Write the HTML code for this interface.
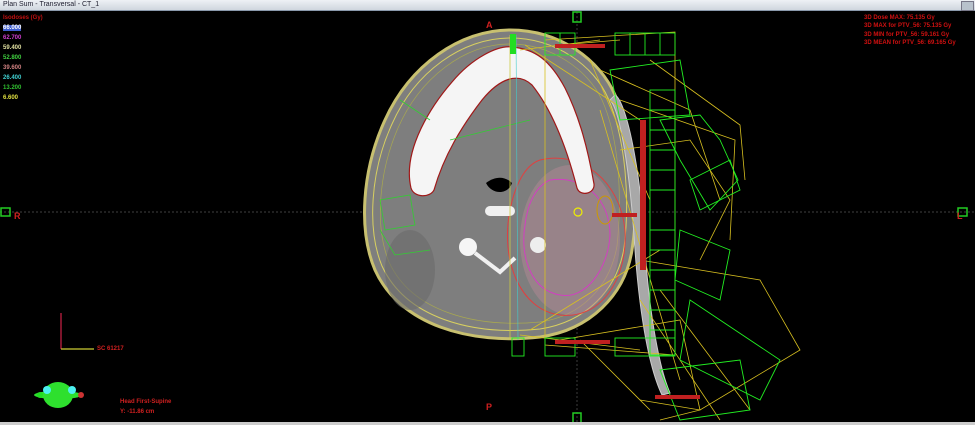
<!DOCTYPE html>
<html><head><style>
html,body{margin:0;padding:0;width:975px;height:425px;overflow:hidden;background:#000;font-family:"Liberation Sans",sans-serif}
.t{position:absolute;font-size:6px;font-weight:bold}
</style></head><body>
<div style="position:absolute;left:0;top:0;width:975px;height:10px;background:linear-gradient(#eef1f5,#cfd6de);border-bottom:1px solid #8a99ab"></div>
<div class="t" style="left:3px;top:1px;color:#223;font-weight:normal;font-size:7px">Plan Sum - Transversal - CT_1</div>
<div style="position:absolute;left:961px;top:1px;width:11px;height:8px;background:#b8c2cc;border:1px solid #778"></div>
<svg width="975" height="425" style="position:absolute;left:0;top:0">
<line x1="0" y1="212" x2="975" y2="212" stroke="#555" stroke-dasharray="2,2" stroke-width="0.7"/>
<line x1="577" y1="12" x2="577" y2="425" stroke="#555" stroke-dasharray="2,2" stroke-width="0.7"/>
<rect x="573" y="12" width="8" height="10" fill="none" stroke="#2c2" stroke-width="1.5"/>
<rect x="573" y="413" width="8" height="10" fill="none" stroke="#2c2" stroke-width="1.5"/>
<rect x="1" y="208" width="9" height="8" fill="none" stroke="#2c2" stroke-width="1.5"/>
<rect x="958" y="208" width="9" height="8" fill="none" stroke="#2c2" stroke-width="1.5"/>
<!-- head -->
<path d="M510,30 C560,30 600,60 615,95 C635,140 640,200 632,250 C625,295 590,330 540,337 C470,345 400,325 375,270 C358,230 362,170 385,120 C410,65 460,30 510,30Z" fill="#7e7e7e" stroke="#c8c070" stroke-width="3"/>
<path d="M510,38 C556,38 594,66 608,98 C626,140 630,200 624,248 C617,290 586,322 540,329 C472,336 406,318 382,266 C367,230 370,172 392,124 C415,72 462,38 510,38Z" fill="none" stroke="#d8d060" stroke-width="1"/>
<path d="M510,44 C552,44 588,70 602,100 C620,140 622,200 617,246 C610,286 582,316 540,322 C476,328 412,312 389,262 C375,228 378,174 398,128 C420,78 464,44 510,44Z" fill="none" stroke="#a8a850" stroke-width="0.7"/>
<ellipse cx="410" cy="270" rx="25" ry="40" fill="#6a6a6a" opacity="0.6"/>
<ellipse cx="570" cy="240" rx="50" ry="75" fill="#b88a96" opacity="0.45"/>
<path d="M540,160 C580,150 620,180 625,230 C628,280 600,320 560,315 C520,310 500,260 510,210 C515,185 525,165 540,160Z" fill="none" stroke="#e04040" stroke-width="1"/>
<path d="M550,180 C585,175 610,200 610,235 C608,270 585,300 560,295 C530,290 520,255 525,225 C528,200 538,185 550,180Z" fill="none" stroke="#d040c0" stroke-width="1"/>
<!-- mandible -->
<path d="M411,188 C402,150 432,105 452,82 C472,58 498,45 512,47 C535,49 550,60 565,88 C580,118 588,150 594,184 C595,194 580,197 577,188 C566,145 552,110 532,85 C518,72 500,78 482,100 C462,126 444,155 434,190 C430,198 414,198 411,188Z" fill="#f5f5f5" stroke="#a01818" stroke-width="1.2"/>
<path d="M486,183 C495,176 505,176 512,183 C508,195 492,195 486,183Z" fill="#000"/>
<rect x="485" y="206" width="30" height="10" rx="5" fill="#f0f0f0"/>
<circle cx="468" cy="247" r="9" fill="#f5f5f5"/>
<circle cx="538" cy="245" r="8" fill="#eee"/>
<path d="M475,253 L500,272 L515,258" fill="none" stroke="#f0f0f0" stroke-width="4"/>
<path d="M380,200 L410,195 L415,225 L385,230Z M400,100 L430,120 M450,140 L530,120 M380,230 L395,255 L430,250" fill="none" stroke="#3c3" stroke-width="0.8"/>
<line x1="510" y1="35" x2="510" y2="340" stroke="#cc4" stroke-width="0.8"/>
<line x1="516" y1="35" x2="518" y2="340" stroke="#4cc" stroke-width="0.6"/>
<rect x="510" y="34" width="6" height="20" fill="#2d2"/>
<circle cx="578" cy="212" r="4" fill="none" stroke="#ee0" stroke-width="1.2"/>
<ellipse cx="605" cy="210" rx="8" ry="14" fill="none" stroke="#c90" stroke-width="1"/>
<path d="M615,95 C625,100 640,160 645,250 C650,320 660,370 670,393 L662,395 C650,370 640,320 635,250 C630,170 620,110 610,100Z" fill="#a8a8a8" stroke="#ccc" stroke-width="1"/>
<!-- beams -->
<g fill="none" stroke="#d8c020" stroke-width="0.8">
<path d="M545,40 L675,32 L675,355 L545,345Z"/>
<path d="M560,45 L620,40 M600,70 L690,110 L720,200 M620,100 L735,140 L730,240"/>
<path d="M620,150 L690,140 L730,200 L700,260 M640,260 L760,280 L800,350 L700,410 L640,400"/>
<path d="M560,340 L680,320 L700,410 L660,420 M580,340 L650,410"/>
<path d="M640,300 L720,420 M660,290 L750,410 M650,60 L740,125 L745,180 M600,110 L680,380 M590,60 L650,200"/>
<path d="M520,50 L600,40 M525,45 L640,120 M530,330 L660,250 M520,335 L640,350"/>
</g>
<g fill="none" stroke="#2e2" stroke-width="0.9">
<rect x="545" y="33" width="30" height="22"/><rect x="615" y="33" width="60" height="22"/>
<path d="M560,33 v22 M630,33 v22 M645,33 v22 M660,33 v22"/>
<path d="M610,70 L680,60 L690,115 L620,120Z"/>
<path d="M660,120 L700,115 L720,140 L738,180 L710,210 L680,160Z"/>
<rect x="650" y="90" width="25" height="265"/>
<path d="M650,110 h25 M650,130 h25 M650,150 h25 M650,170 h25 M650,190 h25 M650,230 h25 M650,250 h25 M650,270 h25 M650,290 h25 M650,310 h25 M650,330 h25"/>
<path d="M690,300 L780,360 L760,400 L680,360Z"/>
<path d="M660,370 L740,360 L750,410 L680,420Z"/>
<rect x="512" y="338" width="12" height="18"/><rect x="545" y="338" width="30" height="18"/><rect x="615" y="338" width="60" height="18"/>
<path d="M680,230 L730,250 L720,300 L675,280Z M690,180 L730,160 L740,190 L700,210Z"/>
</g>
<g fill="#c02020"><rect x="555" y="44" width="50" height="4"/><rect x="640" y="120" width="6" height="150"/><rect x="612" y="213" width="25" height="4"/><rect x="555" y="340" width="55" height="4"/><rect x="655" y="395" width="45" height="4"/></g>
<line x1="61" y1="313" x2="61" y2="349" stroke="#c02040" stroke-width="1.3"/>
<line x1="61" y1="349" x2="94" y2="349" stroke="#cc3" stroke-width="1.3"/>
<ellipse cx="58" cy="395" rx="15" ry="13" fill="#2ee02e"/>
<ellipse cx="58" cy="395" rx="24" ry="4" fill="#2ee02e"/>
<circle cx="47" cy="390" r="4" fill="#4cf0f0"/><circle cx="72" cy="390" r="4" fill="#4cf0f0"/>
<circle cx="40" cy="395" r="3" fill="#2d2"/><circle cx="81" cy="395" r="3" fill="#c33"/>
</svg>
<div class="t" style="left:3px;top:15px;color:#c01010">Isodoses (Gy)</div>
<div class="t" style="left:3px;top:25px;color:#fff;background:#4060d0">66.000</div>
<div class="t" style="left:3px;top:35px;color:#d040d0">62.700</div>
<div class="t" style="left:3px;top:45px;color:#e0e0a0">59.400</div>
<div class="t" style="left:3px;top:55px;color:#40d040">52.800</div>
<div class="t" style="left:3px;top:65px;color:#d08080">39.600</div>
<div class="t" style="left:3px;top:75px;color:#40d0d0">26.400</div>
<div class="t" style="left:3px;top:85px;color:#30c030">13.200</div>
<div class="t" style="left:3px;top:95px;color:#e0e040">6.600</div>
<div class="t" style="left:864px;top:15px;color:#d01010">3D Dose MAX: 75.135 Gy</div>
<div class="t" style="left:864px;top:23px;color:#d01010">3D MAX for PTV_56: 75.135 Gy</div>
<div class="t" style="left:864px;top:32px;color:#d01010">3D MIN for PTV_56: 59.161 Gy</div>
<div class="t" style="left:864px;top:40px;color:#d01010">3D MEAN for PTV_56: 69.165 Gy</div>
<div class="t" style="left:486px;top:20px;color:#d02020;font-size:9px">A</div>
<div class="t" style="left:486px;top:402px;color:#d02020;font-size:9px">P</div>
<div class="t" style="left:14px;top:211px;color:#d02020;font-size:9px">R</div>
<div class="t" style="left:957px;top:211px;color:#d02020;font-size:9px">L</div>
<div class="t" style="left:97px;top:346px;color:#d02020">SC 61217</div>
<div class="t" style="left:120px;top:399px;color:#d02020">Head First-Supine</div>
<div class="t" style="left:120px;top:409px;color:#d02020">Y: -11.86 cm</div>
<div style="position:absolute;left:0;top:422px;width:975px;height:3px;background:#ccc"></div>
</body></html>
